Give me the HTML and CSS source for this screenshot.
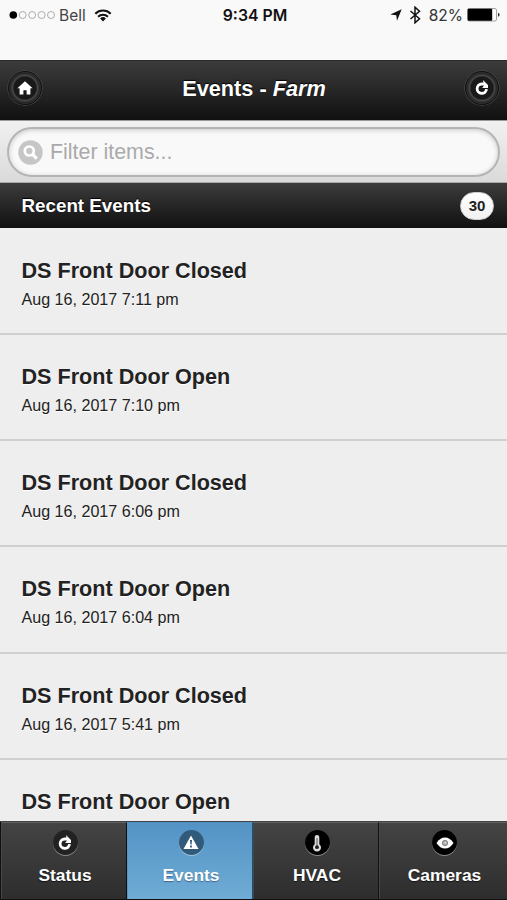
FILE: index.html
```html
<!DOCTYPE html>
<html lang="en">
<head>
  <meta charset="UTF-8">
  <title>Events - Farm</title>
  <meta name="viewport" content="width=device-width, initial-scale=1">
  <link rel="stylesheet" href="styles.css">
</head>
<body>
  <div class="page">
    <div class="statusbar">
      <div class="status-left">
        <svg width="46" height="10" viewBox="0 0 46 10">
          <circle cx="4.3" cy="5" r="3.8" fill="#000"/>
          <g fill="none" stroke="#999" stroke-width="0.8">
            <circle cx="13.7" cy="5" r="3.5"/>
            <circle cx="23.2" cy="5" r="3.5"/>
            <circle cx="32.6" cy="5" r="3.5"/>
            <circle cx="42" cy="5" r="3.5"/>
          </g>
        </svg>
        <span class="carrier">Bell</span>
        <svg class="wifi" width="18" height="13" viewBox="0 0 18 13">
          <g fill="none" stroke="#111" stroke-width="2.1">
            <path d="M1.3 4.7a11 11 0 0 1 15.4 0"/>
            <path d="M4.1 7.8a7 7 0 0 1 9.8 0"/>
          </g>
          <path d="M9 12.5l-2.9-3a4.1 4.1 0 0 1 5.8 0z" fill="#111"/>
        </svg>
      </div>
      <div class="clock">9:34 PM</div>
      <div class="status-right">
        <svg width="12" height="12" viewBox="0 0 12 12"><path d="M11.7.3L7 11.7 6.3 6.2.3 5.4z" fill="#111"/></svg>
        <svg class="bluetooth" width="12" height="18" viewBox="0 0 12 18"><path d="M1.5 5l9 7.7L6 16.8V1.2l4.5 4.1L1.5 13" fill="none" stroke="#111" stroke-width="1.5"/></svg>
        <span class="percent">82%</span>
        <svg width="33" height="14" viewBox="0 0 33 14">
          <rect x=".5" y=".5" width="29" height="12.5" rx="1.8" fill="#fff" stroke="#888" stroke-width=".8"/>
          <rect x=".7" y=".7" width="24.5" height="12" rx="1" fill="#000"/>
          <path d="M31 4.7q1.6.5 1.6 2t-1.6 2z" fill="#333"/>
        </svg>
      </div>
    </div>

    <div class="header">
      <a class="round-btn">
        <svg width="16" height="14" viewBox="0 0 16 14"><path d="M8 .2l7.6 7h-2.2v6.3H9.6V9.2H6.4v4.3H2.6V7.2H.4z" fill="#fff"/></svg>
      </a>
      <h1>Events - <i>Farm</i></h1>
      <a class="round-btn">
        <svg width="14" height="16" viewBox="0 0 14 16"><path d="M9 4H6.8a4.7 4.7 0 1 0 4.7 5.2" fill="none" stroke="#fff" stroke-width="2.8"/><path d="M8 0l5 5v3H7.2L9 5.6z" fill="#fff"/></svg>
      </a>
    </div>

    <div class="filter">
      <div class="search">
        <svg width="25" height="25" viewBox="0 0 25 25">
          <circle cx="12.5" cy="12.5" r="12.2" fill="#c6c6c6"/>
          <circle cx="11.3" cy="11" r="4.5" fill="none" stroke="#fff" stroke-width="2.7"/>
          <path d="M14.5 14.2l4.2 4.5" stroke="#fff" stroke-width="3.2"/>
        </svg>
        <span>Filter items...</span>
      </div>
    </div>

    <div class="divider">
      <span>Recent Events</span>
      <span class="count">30</span>
    </div>

    <div class="list">
      <div class="item">
        <h3>DS Front Door Closed</h3>
        <p>Aug 16, 2017 7:11 pm</p>
      </div>
      <div class="item">
        <h3>DS Front Door Open</h3>
        <p>Aug 16, 2017 7:10 pm</p>
      </div>
      <div class="item">
        <h3>DS Front Door Closed</h3>
        <p>Aug 16, 2017 6:06 pm</p>
      </div>
      <div class="item">
        <h3>DS Front Door Open</h3>
        <p>Aug 16, 2017 6:04 pm</p>
      </div>
      <div class="item">
        <h3>DS Front Door Closed</h3>
        <p>Aug 16, 2017 5:41 pm</p>
      </div>
      <div class="item">
        <h3>DS Front Door Open</h3>
      </div>
    </div>

    <div class="navbar">
      <a class="tab">
        <span class="tab-icon">
          <svg width="14" height="16" viewBox="0 0 14 16"><path d="M9 4H6.8a4.7 4.7 0 1 0 4.7 5.2" fill="none" stroke="#fff" stroke-width="2.8"/><path d="M8 0l5 5v3H7.2L9 5.6z" fill="#fff"/></svg>
        </span>
        Status
      </a>
      <a class="tab active">
        <span class="tab-icon">
          <svg width="16" height="15" viewBox="0 0 16 15"><path d="M8 .5l7.5 13.5H.5z" fill="#fff"/><path d="M7 5h2l-.4 4.4H7.4zM7.1 10.6h1.8v1.8H7.1z" fill="#31597a"/></svg>
        </span>
        Events
      </a>
      <a class="tab">
        <span class="tab-icon black">
          <svg width="10" height="18" viewBox="0 0 10 18"><path d="M2.7 3.2a2.3 2.3 0 0 1 4.6 0v7a4 4 0 1 1-4.6 0z" fill="#ddd"/><path d="M5 4v8" stroke="#777" stroke-width="1.3"/><circle cx="5" cy="13.2" r="1.9" fill="#222"/></svg>
        </span>
        HVAC
      </a>
      <a class="tab">
        <span class="tab-icon black">
          <svg width="18" height="12" viewBox="0 0 18 12"><path d="M.5 6Q4 .5 9 .5T17.5 6Q14 11.5 9 11.5T.5 6z" fill="#fff"/><circle cx="9" cy="6" r="2.7" fill="#aaa" stroke="#777" stroke-width=".8"/><circle cx="9.3" cy="5.7" r="1" fill="#ddd"/></svg>
        </span>
        Cameras
      </a>
    </div>
  </div>
</body>
</html>
```
FILE: styles.css
```css
* { box-sizing: border-box; }
body {
  margin: 0;
  font-family: "Liberation Sans", Arial, sans-serif;
  background: #eee;
  color: #222;
}
svg {
  display: block;
  flex: none;
}
.page {
  display: flex;
  flex-direction: column;
  height: 900px;
  overflow: hidden;
}

/* phone status bar */
.statusbar {
  display: grid;
  grid-template-columns: 1fr auto 1fr;
  align-items: start;
  flex: none;
  height: 60px;
  padding: 5px 7px 0 9px;
  background: #f9f9f9;
  font-family: Inter, sans-serif;
  font-size: 15.5px;
  line-height: 21px;
  color: #222;
}
.status-left,
.status-right {
  display: flex;
  align-items: center;
  height: 20px;
}
.status-right {
  justify-content: flex-end;
}
.carrier {
  margin-left: 4px;
  color: #444;
}
.wifi {
  margin-left: 8px;
}
.clock {
  padding-left: 1px;
  font-weight: 600;
  font-size: 15.8px;
  color: #111;
}
.bluetooth {
  margin: 0 8px 0 7px;
}
.percent {
  margin-right: 4px;
  color: #333;
}

.header {
  display: flex;
  align-items: center;
  justify-content: space-between;
  flex: none;
  height: 60px;
  padding: 0 8px 4px;
  border-top: 1px solid #2a2a2a;
  border-bottom: 1px solid #111;
  background: linear-gradient(#3c3c3c, #111);
  color: #fff;
  text-shadow: 0 -1px 1px #000;
}
.header h1 {
  margin: 0;
  padding: 2px 0 0 1px;
  font-size: 21.7px;
  line-height: 26px;
}
.round-btn {
  display: flex;
  align-items: center;
  justify-content: center;
  width: 34px;
  height: 34px;
  border: 1px solid #111;
  border-radius: 50%;
  background: radial-gradient(circle, #191919 11px, #484848 12.5px, #272727 14.5px, #303030 16px);
  box-shadow: 0 0 0 .7px #484848;
}

.filter {
  flex: none;
  height: 63px;
  padding: 6px 7px;
  border-top: 1px solid #999;
  border-bottom: 1px solid #aaa;
  background: linear-gradient(#f1f1f1, #dadada);
}
.search {
  display: flex;
  align-items: center;
  gap: 7px;
  height: 50px;
  padding-left: 9px;
  border: 2px solid #b4b4b4;
  border-radius: 25px;
  background: #f9f9f9;
  box-shadow: inset 0 1px 5px rgba(0, 0, 0, .2);
  font-size: 21.4px;
  color: #aaa;
}

.divider {
  display: flex;
  align-items: center;
  justify-content: space-between;
  flex: none;
  height: 45px;
  padding: 2px 13px 0 21.5px;
  border-bottom: 1px solid #111;
  background: linear-gradient(#3c3c3c, #111);
  color: #fff;
  font-size: 18.8px;
  font-weight: bold;
  line-height: 20px;
  text-shadow: 0 -1px 1px #000;
}
.count {
  width: 34px;
  height: 28px;
  border: 1px solid #ccc;
  border-radius: 14px;
  background: linear-gradient(#fff, #f1f1f1);
  color: #222;
  font-size: 15px;
  line-height: 26px;
  text-align: center;
  text-shadow: none;
}

.list {
  flex: 1;
  min-height: 0;
  overflow: hidden;
}
.item {
  height: 106.2px;
  padding: 29px 21.5px 0;
  border-bottom: 2px solid #d0d0d0;
  text-shadow: 0 1px 0 #fff;
}
.item:first-child {
  height: 107px;
  padding-top: 30px;
}
.item h3 {
  margin: 0;
  font-size: 21.6px;
  line-height: 26px;
}
.item p {
  margin: 6px 0 0;
  font-size: 16.1px;
  line-height: 18px;
}

.navbar {
  display: grid;
  grid-template-columns: 126px 126px 126px 1fr;
  flex: none;
  height: 79px;
  padding-left: 1px;
  border-top: 1px solid #444;
  border-bottom: 1px solid #111;
  background: #111;
}
.tab {
  display: flex;
  flex-direction: column;
  align-items: center;
  gap: 10px;
  padding: 7px 0 0 2px;
  border-right: 1px solid #111;
  border-left: 1px solid #484848;
  border-top: 1px solid #606060;
  background: linear-gradient(#444, #2d2d2d);
  color: #fff;
  font-size: 17.4px;
  font-weight: bold;
  line-height: 20px;
  text-shadow: 0 1px 1px #111;
}
.tab:last-child {
  border-right: none;
}
.tab.active {
  border-color: #4f93c4 #1d4d73 #6facd5 #5393c5;
  background: linear-gradient(#5393c5, #6facd5);
  text-shadow: 0 1px 1px #3e6790;
}
.tab-icon {
  display: flex;
  align-items: center;
  justify-content: center;
  width: 25px;
  height: 25px;
  border-radius: 50%;
  background: #222;
  box-shadow: 0 1px 0 rgba(255, 255, 255, .4);
}
.tab-icon.black {
  background: #000;
}
.tab.active .tab-icon {
  background: #31597a;
}
```
